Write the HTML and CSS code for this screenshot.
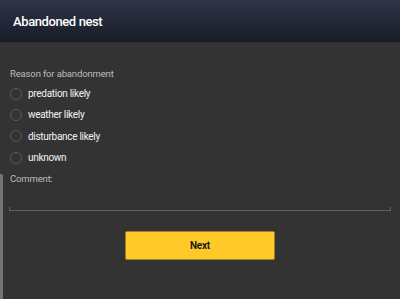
FILE: index.html
```html
<!DOCTYPE html>
<html>
<head>
<meta charset="utf-8">
<link rel="stylesheet" href="styles.css">
</head>
<body>
<div class="app">
  <header class="bar"><h1 class="title">Abandoned nest</h1></header>
  <main class="content">
    <div class="group-label">Reason for abandonment</div>
    <div class="options">
      <div class="option"><span class="radio"></span><span class="opt-text">predation likely</span></div>
      <div class="option"><span class="radio"></span><span class="opt-text">weather likely</span></div>
      <div class="option"><span class="radio"></span><span class="opt-text">disturbance likely</span></div>
      <div class="option"><span class="radio"></span><span class="opt-text">unknown</span></div>
    </div>
    <div class="comment-label">Comment:</div>
    <div class="comment-field"></div>
    <div class="actions"><button class="next">Next</button></div>
  </main>
  <div class="scrollbar"></div>
</div>
</body>
</html>
```

FILE: styles.css
```css
html, body {
  margin: 0;
  padding: 0;
  background: #333333;
}
.app {
  position: relative;
  width: 400px;
  height: 299px;
  overflow: hidden;
  font-family: Roboto, "Liberation Sans", sans-serif;
}
.bar {
  height: 42px;
  background: linear-gradient(#2f3549, #171c28);
  border-bottom: 1px solid #2a2f3a;
  display: flex;
  align-items: center;
  padding-left: 13px;
}
.title {
  margin: 0;
  font-size: 13px;
  letter-spacing: -0.4px;
  font-weight: 500;
  color: #ffffff;
}
.content {
  padding: 0 9px 0 10px;
}
.group-label {
  margin-top: 24px;
  font-size: 9.5px;
  letter-spacing: -0.15px;
  line-height: 13px;
  color: #bdbdbd;
}
.options {
  margin-top: 3px;
  display: flex;
  flex-direction: column;
}
.option {
  height: 21.3px;
  display: flex;
  align-items: center;
}
.radio {
  width: 10px;
  height: 10px;
  border: 1.5px solid #5a5a5a;
  border-radius: 50%;
  margin-left: 0;
}
.opt-text {
  margin-left: 6px;
  font-size: 10px;
  letter-spacing: -0.3px;
  color: #f2f2f2;
}
.comment-label {
  margin-top: 4px;
  font-size: 9.5px;
  letter-spacing: -0.15px;
  line-height: 13px;
  color: #bdbdbd;
}
.comment-field {
  margin-top: 22px;
  height: 3px;
  border: 1px solid #626262;
  border-top: none;
  width: 380px;
  margin-left: -1px;
}
.actions {
  display: flex;
  justify-content: center;
  margin-top: 20px;
  padding-right: 1px;
}
.next {
  width: 150px;
  height: 29px;
  background: #ffca28;
  border: 1px solid #9c8128;
  border-radius: 2px;
  font-family: Roboto, "Liberation Sans", sans-serif;
  font-size: 10px;
  letter-spacing: -0.2px;
  font-weight: 700;
  color: #1a1a1a;
  padding: 0;
}
.scrollbar {
  position: absolute;
  left: 0;
  top: 174px;
  width: 3px;
  height: 130px;
  background: #747474;
  border-radius: 0 2px 0 0;
}
```
